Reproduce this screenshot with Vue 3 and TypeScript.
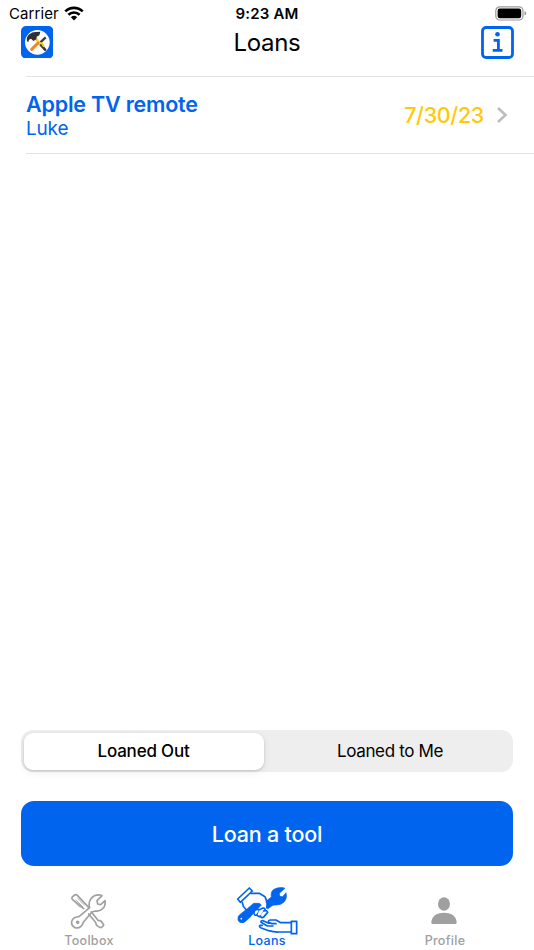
<script setup lang="ts">
import { ref } from 'vue'

interface Loan {
  tool: string
  borrower: string
  due: string
}

const segments = ['Loaned Out', 'Loaned to Me']
const activeSegment = ref(0)
const loans: Loan[] = [{ tool: 'Apple TV remote', borrower: 'Luke', due: '7/30/23' }]
</script>

<template>
  <div class="screen">
    <div class="status">
      <div class="carrier">
        <span class="carrier-name">Carrier</span>
        <svg class="wifi" viewBox="0 0 20 15" width="20" height="15">
          <path d="M1.3 5.4a12.6 12.6 0 0 1 17.4 0" />
          <path d="M4.4 8.7a8.1 8.1 0 0 1 11.2 0" />
          <path class="dot" d="M6.9 11.2a4.5 4.5 0 0 1 6.2 0L10 14.4z" />
        </svg>
      </div>
      <span class="clock">9:23 AM</span>
      <svg class="battery" viewBox="0 0 32 15" width="32" height="15">
        <rect class="shell" x="0.8" y="0.8" width="27.2" height="13.2" rx="4" />
        <rect x="2.6" y="2.6" width="23.6" height="9.6" rx="2.2" />
        <path class="tip" d="M29.5 5.2q1.8.6 1.8 2.2t-1.8 2.2z" />
      </svg>
    </div>

    <header class="header">
      <svg class="logo" viewBox="62 78 97 97" width="32.4" height="32.4">
        <rect x="62" y="78" width="97" height="97" rx="15" fill="#0064ee" />
        <circle cx="111" cy="127" r="37" fill="#fff" />
        <path d="M118 131l16 18" stroke="#3a3a3c" stroke-width="8" stroke-linecap="round" />
        <path d="M120 127l16-15" stroke="#3a3a3c" stroke-width="7" />
        <path d="M123 127l8 13" stroke="#e8d52a" stroke-width="6" />
        <path d="M104 113l16 20" stroke="#f4d62c" stroke-width="8" />
        <path d="M113 129l-19 19" stroke="#f28422" stroke-width="9" stroke-linecap="round" />
        <path d="M80 124q-3-13 7-21 8-7 18-7l15-1-3 11-8 4-1 8-9 5-7-7-6 3-2 7z" fill="#303033" />
      </svg>
      <h1 class="title">Loans</h1>
      <svg class="info" viewBox="0 0 33 33" width="33" height="33">
        <rect class="frame" x="1.5" y="1.5" width="30" height="30" rx="3.6" />
        <circle cx="16.5" cy="8.2" r="2.3" />
        <path class="stem" d="M12.6 14.3h4.8v10M11.7 24.4h9.8" />
      </svg>
    </header>

    <main class="list">
      <div v-for="loan in loans" :key="loan.tool" class="row">
        <div class="names">
          <span class="tool">{{ loan.tool }}</span>
          <span class="borrower">{{ loan.borrower }}</span>
        </div>
        <span class="due">{{ loan.due }}</span>
        <svg class="chevron" viewBox="0 0 12 18" width="12" height="18">
          <path d="M2 2l7.5 7L2 16" />
        </svg>
      </div>
    </main>

    <div class="segmented">
      <button
        v-for="(label, i) in segments"
        :key="label"
        class="segment"
        :class="{ active: i === activeSegment }"
        @click="activeSegment = i"
      >
        {{ label }}
      </button>
    </div>

    <button class="primary">Loan a tool</button>

    <nav class="tabs">
      <a class="tab">
        <span class="glyph">
          <svg class="line" viewBox="62 38 108 108" width="36" height="36">
            <path d="M103 85L69 57q-3-4 1-8l6-5q4-3 8 1l34 36" />
            <path d="M80 59l20 20M85 54l20 20M76 65l16 16" stroke-width="2.5" />
            <path d="M118 101l20 24 4 10 9 6q4 2 7-1l4-4q2-3-1-6l-8-9-7-1-20-25" />
            <path d="M121 82q-5-15 4-27 10-13 28-11l5 2-15 15 2 10 9 2 13-12q3 14-7 24-9 9-22 7l-10 3-26 31q-2 7-7 12-8 7-18 4-12-6-10-18 3-12 15-14l8-2z" />
            <circle cx="85" cy="126" r="3" />
          </svg>
        </span>
        <span class="name">Toolbox</span>
      </a>
      <a class="tab selected">
        <span class="glyph">
          <svg class="loan" viewBox="33 18 186 150" width="62" height="50">
            <path class="line" d="M38 57L73 24l9 9-36 34z" />
            <path class="line" d="M78 40h25l17 10 8 21-3 12M52 67l3 12 14 17" />
            <path class="solid" d="M39 117q-1-8 5-13l22-17 20-17 17 0 6 5-11 12-11 10-9 12-14 13q-10 10-19 5-6-3-6-8z" />
            <circle class="hole" cx="49" cy="116" r="2.5" />
            <path class="solid" d="M123 64l16-13q-3-16 8-23 10-7 28-5l5 2-17 15 1 9 9 1 10-12q4 18-6 28-9 9-23 9-9-1-14 3l-12 9z" />
            <path class="line finger" d="M87 96q2-8 10-8l6 2-1 6-7 9q-6 3-8-5z" />
            <path class="line finger" d="M103 89l11-5q7 0 6 7l-12 17q-5 4-11-1" />
            <path class="line finger" d="M116 93q10-4 12 4l-13 15q-5 3-9-4" />
            <path class="line" d="M199 124h16v37h-16z" />
            <path class="line" d="M199 128h-32l-14-8h-17q-8 1-5 8l10 3h12M131 130l-17-8q-7-1-6 5l18 10M112 136l-7 0q-4 4 2 7l24 9q18 5 31 4h37" />
            <path class="line" d="M128 138h16" />
          </svg>
        </span>
        <span class="name">Loans</span>
      </a>
      <a class="tab">
        <span class="glyph">
          <svg class="person" viewBox="78 50 78 84" width="26" height="28">
            <ellipse cx="117" cy="71" rx="18" ry="20" />
            <path d="M79 127c0-18 14-30 38-30s38 12 38 30q0 4-5 4H84q-5 0-5-4z" />
          </svg>
        </span>
        <span class="name">Profile</span>
      </a>
    </nav>
  </div>
</template>

<style>
body {
  background: #fff;
}
</style>

<style scoped>
.screen {
  box-sizing: border-box;
  width: 534px;
  height: 950px;
  display: flex;
  flex-direction: column;
  overflow: hidden;
  background: #fff;
  color: #000;
  font-family: Inter, "Liberation Sans", sans-serif;
}
button {
  border: 0;
  margin: 0;
  padding: 0;
  font: inherit;
  color: inherit;
}
svg {
  display: block;
  flex: none;
}
.status {
  height: 26px;
  padding: 0 7px 0 9px;
  display: grid;
  grid-template-columns: 1fr auto 1fr;
  align-items: center;
  font-size: 15px;
  line-height: 26px;
}
.carrier {
  display: flex;
  align-items: center;
  gap: 5px;
}
.carrier-name {
  padding-top: 1px;
  letter-spacing: 0.1px;
}
.wifi {
  fill: none;
  stroke: #000;
  stroke-width: 2.6;
}
.wifi .dot {
  fill: #000;
  stroke: none;
}
.clock {
  padding: 1px 2px 0 0;
  font-weight: 600;
  letter-spacing: 0.2px;
}
.battery {
  justify-self: end;
}
.battery .shell {
  fill: none;
  stroke: #999;
  stroke-width: 1.2;
}
.battery .tip {
  fill: #999;
}
.header {
  height: 50px;
  box-sizing: border-box;
  padding: 0 20px 0 20.5px;
  display: flex;
  justify-content: space-between;
  align-items: flex-start;
}
.title {
  margin: 1px 0 0;
  font-size: 24px;
  line-height: 32px;
  font-weight: 400;
  letter-spacing: -0.3px;
}
.info {
  fill: #0064ee;
}
.info .frame {
  fill: none;
  stroke: #0064ee;
  stroke-width: 2.8;
}
.info .stem {
  fill: none;
  stroke: #0064ee;
  stroke-width: 2.8;
}
.list {
  flex: 1;
  margin-left: 26px;
  border-top: 1px solid #e3e3e4;
}
.row {
  height: 77px;
  box-sizing: border-box;
  padding-right: 26px;
  display: flex;
  align-items: center;
  border-bottom: 1px solid #e3e3e4;
}
.names {
  flex: 1;
  padding-top: 2px;
  display: flex;
  flex-direction: column;
  color: #0064ee;
}
.tool {
  font-size: 21.5px;
  line-height: 25px;
  font-weight: 600;
  letter-spacing: -0.2px;
}
.borrower {
  font-size: 19px;
  line-height: 24px;
  letter-spacing: -0.2px;
}
.due {
  margin-right: 12px;
  color: #ffc907;
  font-size: 21.5px;
  font-weight: 500;
  letter-spacing: -0.35px;
}
.chevron {
  fill: none;
  stroke: #bdbdc0;
  stroke-width: 2.6;
}
.segmented {
  height: 42px;
  box-sizing: border-box;
  margin: 0 21px;
  padding: 2.5px;
  display: grid;
  grid-template-columns: 240px 1fr;
  border-radius: 12px;
  background: #eee;
}
.segment {
  border-radius: 9px;
  background: transparent;
  padding: 0 0 0 6px;
  font-size: 17px;
  font-weight: 400;
  letter-spacing: -0.35px;
}
.segment.active {
  padding: 0;
  background: #fff;
  font-weight: 500;
  letter-spacing: -0.2px;
  box-shadow: 0 1px 3px rgba(0, 0, 0, 0.16), 0 3px 8px rgba(0, 0, 0, 0.06);
}
.primary {
  height: 65px;
  margin: 29px 21px 0;
  border-radius: 13px;
  background: #0064ee;
  color: #fff;
  font-size: 21.5px;
  font-weight: 500;
  letter-spacing: -0.2px;
}
.tabs {
  height: 84px;
  display: grid;
  grid-template-columns: repeat(3, 1fr);
}
.tab {
  display: flex;
  flex-direction: column;
  align-items: center;
  color: #a0a0a0;
}
.glyph {
  height: 66px;
  padding: 23px 2px 0 0;
  box-sizing: border-box;
  display: flex;
  align-items: center;
}
.name {
  font-size: 12.5px;
  line-height: 17px;
  font-weight: 500;
  letter-spacing: 0.3px;
}
.selected {
  color: #0064ee;
}
.selected .glyph {
  padding-right: 1px;
}
.line {
  fill: none;
  stroke: currentColor;
  stroke-width: 5;
  stroke-linejoin: round;
  stroke-linecap: round;
}
.solid {
  fill: currentColor;
  stroke: currentColor;
  stroke-width: 2;
  stroke-linejoin: round;
}
.hole,
.finger {
  fill: #fff;
}
.person {
  fill: currentColor;
}
</style>
